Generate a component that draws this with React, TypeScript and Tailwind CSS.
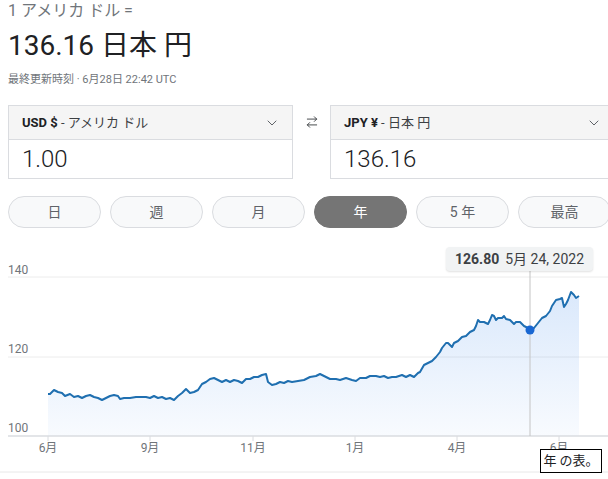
import { ArrowRightLeft, ChevronDown } from 'lucide-react';

const jp = { fontFamily: 'Roboto, "Noto Sans CJK JP", sans-serif' };

const linePts: [number, number][] = [
  [48, 394], [50, 394], [54, 390], [58, 392], [62, 393], [65, 396], [70, 394], [74, 397], [78, 396], [82, 398],
  [86, 396], [90, 395], [94, 397], [98, 398], [102, 400], [106, 398], [110, 396], [114, 395], [118, 396], [120, 399],
  [124, 398], [130, 398], [136, 397], [140, 397], [146, 397], [150, 398], [154, 396], [158, 398], [162, 397], [166, 399],
  [170, 398], [174, 400], [178, 396], [182, 393], [186, 389], [190, 393], [194, 392], [198, 390], [202, 384], [206, 382],
  [210, 379], [214, 378], [218, 380], [222, 382], [226, 380], [230, 382], [234, 380], [238, 381], [242, 383], [246, 379],
  [250, 379], [254, 377], [258, 377], [262, 375], [266, 374], [268, 382], [272, 385], [276, 384], [280, 382], [284, 383],
  [288, 381], [292, 382], [298, 381], [304, 380], [310, 377], [316, 376], [320, 374], [326, 377], [330, 379], [336, 379],
  [340, 380], [346, 378], [352, 380], [356, 381], [360, 378], [366, 378], [370, 376], [376, 376], [380, 377], [384, 376],
  [388, 378], [392, 377], [396, 377], [402, 375], [406, 377], [410, 375], [414, 377], [418, 373], [420, 372], [424, 365],
  [428, 363], [432, 361], [436, 357], [440, 352], [442, 348], [446, 343], [448, 343], [450, 345], [452, 347], [454, 343],
  [458, 341], [462, 337], [466, 336], [470, 332], [474, 330], [476, 326], [478, 320], [480, 322], [484, 322], [488, 324],
  [490, 320], [492, 315], [494, 316], [496, 320], [498, 318], [502, 318], [504, 316], [506, 319], [510, 320], [514, 324],
  [516, 322], [520, 322], [524, 326], [528, 328], [530, 330], [534, 328], [538, 323], [542, 318], [546, 316], [550, 311],
  [552, 306], [556, 300], [560, 299], [562, 298], [564, 307], [566, 304], [568, 300], [571, 292], [574, 295], [576, 298],
  [579, 296],
];

const lineD = linePts.map(([x, y], i) => `${i ? 'L' : 'M'}${x} ${y - 240}`).join(' ');
const areaD = `${lineD} L579 196 L48 196 Z`;

const ranges = ['日', '週', '月', '年', '5 年', '最高'];
const months: [string, number][] = [['6月', 48], ['9月', 150], ['11月', 253], ['1月', 355], ['4月', 457], ['6月', 559]];

function CurrencyBox({ code, name, value }: { code: string; name: string; value: string }) {
  return (
    <div className="w-[285px] shrink-0 border border-[#dadce0] bg-white">
      <div className="h-[34px] flex items-center justify-between pl-[13px] pr-[12px] bg-[#f5f5f5] border-b border-[#dadce0]">
        <div className="text-[13px] text-[#3c4043]">
          <span className="font-bold text-[#202124]">{code}</span> - {name}
        </div>
        <ChevronDown className="w-4 h-4 text-[#5f6368]" strokeWidth={1.5} />
      </div>
      <div className="h-[38px] flex items-center pl-[13px] text-[24px] text-[#202124] font-light">{value}</div>
    </div>
  );
}

export default function App() {
  return (
    <div className="w-[608px] h-[479px] overflow-hidden bg-white relative" style={jp}>
      <div className="px-2">
        <div className="pt-[1px] text-[16px] leading-5 text-[#70757a]">1 アメリカ ドル =</div>
        <div className="mt-[7px] text-[28px] leading-9 text-[#202124]">136.16 日本 円</div>
        <div className="mt-[8px] text-[11px] leading-4 text-[#70757a]">最終更新時刻 · 6月28日 22:42 UTC</div>

        <div className="mt-[17px] flex items-center">
          <CurrencyBox code="USD $" name="アメリカ ドル" value="1.00" />
          <div className="w-[37px] shrink-0 flex justify-center self-start pt-[10px]">
            <ArrowRightLeft className="w-[14px] h-[14px] text-[#3c4043]" strokeWidth={1.6} />
          </div>
          <CurrencyBox code="JPY ¥" name="日本 円" value="136.16" />
        </div>

        <div className="mt-[17px] flex gap-[9px]">
          {ranges.map((r) => (
            <div
              key={r}
              className={`w-[93px] h-[32px] shrink-0 rounded-full flex items-center justify-center text-[14px] ${
                r === '年' ? 'bg-[#757575] text-white border border-[#757575]' : 'bg-[#f8f9fa] text-[#5f6368] border border-[#dadce0]'
              }`}
            >
              {r}
            </div>
          ))}
        </div>
      </div>

      <div className="absolute left-0 top-[240px] w-[608px] h-[239px]">
        <svg width="608" height="239" viewBox="0 0 608 239">
          <defs>
            <linearGradient id="fill" x1="0" y1="0" x2="0" y2="1">
              <stop offset="0" stopColor="#1a73e8" stopOpacity="0.16" />
              <stop offset="1" stopColor="#1a73e8" stopOpacity="0.03" />
            </linearGradient>
          </defs>
          <line x1="8" y1="37" x2="608" y2="37" stroke="#ececec" strokeWidth="1" />
          <line x1="8" y1="117" x2="608" y2="117" stroke="#ececec" strokeWidth="1" />
          <path d={areaD} fill="url(#fill)" />
          <line x1="8" y1="196" x2="608" y2="196" stroke="#dadce0" strokeWidth="1.5" />
          {months.map(([m, x], i) => (
            <line key={m + i} x1={x} y1="196" x2={x} y2="201" stroke="#dadce0" strokeWidth="1" />
          ))}
          <line x1="530" y1="30" x2="530" y2="196" stroke="#c4c4c4" strokeWidth="1" />
          <path d={lineD} fill="none" stroke="#1f6fb0" strokeWidth="2" strokeLinejoin="round" />
          <circle cx="530" cy="90" r="4.5" fill="#1967d2" />
          <line x1="0" y1="232" x2="608" y2="232" stroke="#e8e8e8" strokeWidth="1" />
        </svg>

        <div className="absolute left-2 top-[22px] text-[12px] leading-4 text-[#70757a]">140</div>
        <div className="absolute left-2 top-[101px] text-[12px] leading-4 text-[#70757a]">120</div>
        <div className="absolute left-2 top-[180px] text-[12px] leading-4 text-[#70757a]">100</div>
        {months.map(([m, x], i) => (
          <div key={m + i} className="absolute top-[200px] w-10 -ml-5 text-center text-[12px] leading-4 text-[#70757a]" style={{ left: x }}>
            {m}
          </div>
        ))}

        <div className="absolute left-[446px] top-[7px] w-[147px] h-[24px] rounded bg-[#f1f3f4] flex items-center justify-center gap-[6px] text-[14px] text-[#3c4043] shadow-[0_1px_2px_rgba(0,0,0,0.12)]">
          <span className="font-bold">126.80</span>
          <span>5月 24, 2022</span>
        </div>

        <div className="absolute left-[540px] top-[209px] w-[62px] h-[24px] border border-black bg-white flex items-center justify-center text-[13px] text-[#202124]">
          年 の表。
        </div>
      </div>
    </div>
  );
}
